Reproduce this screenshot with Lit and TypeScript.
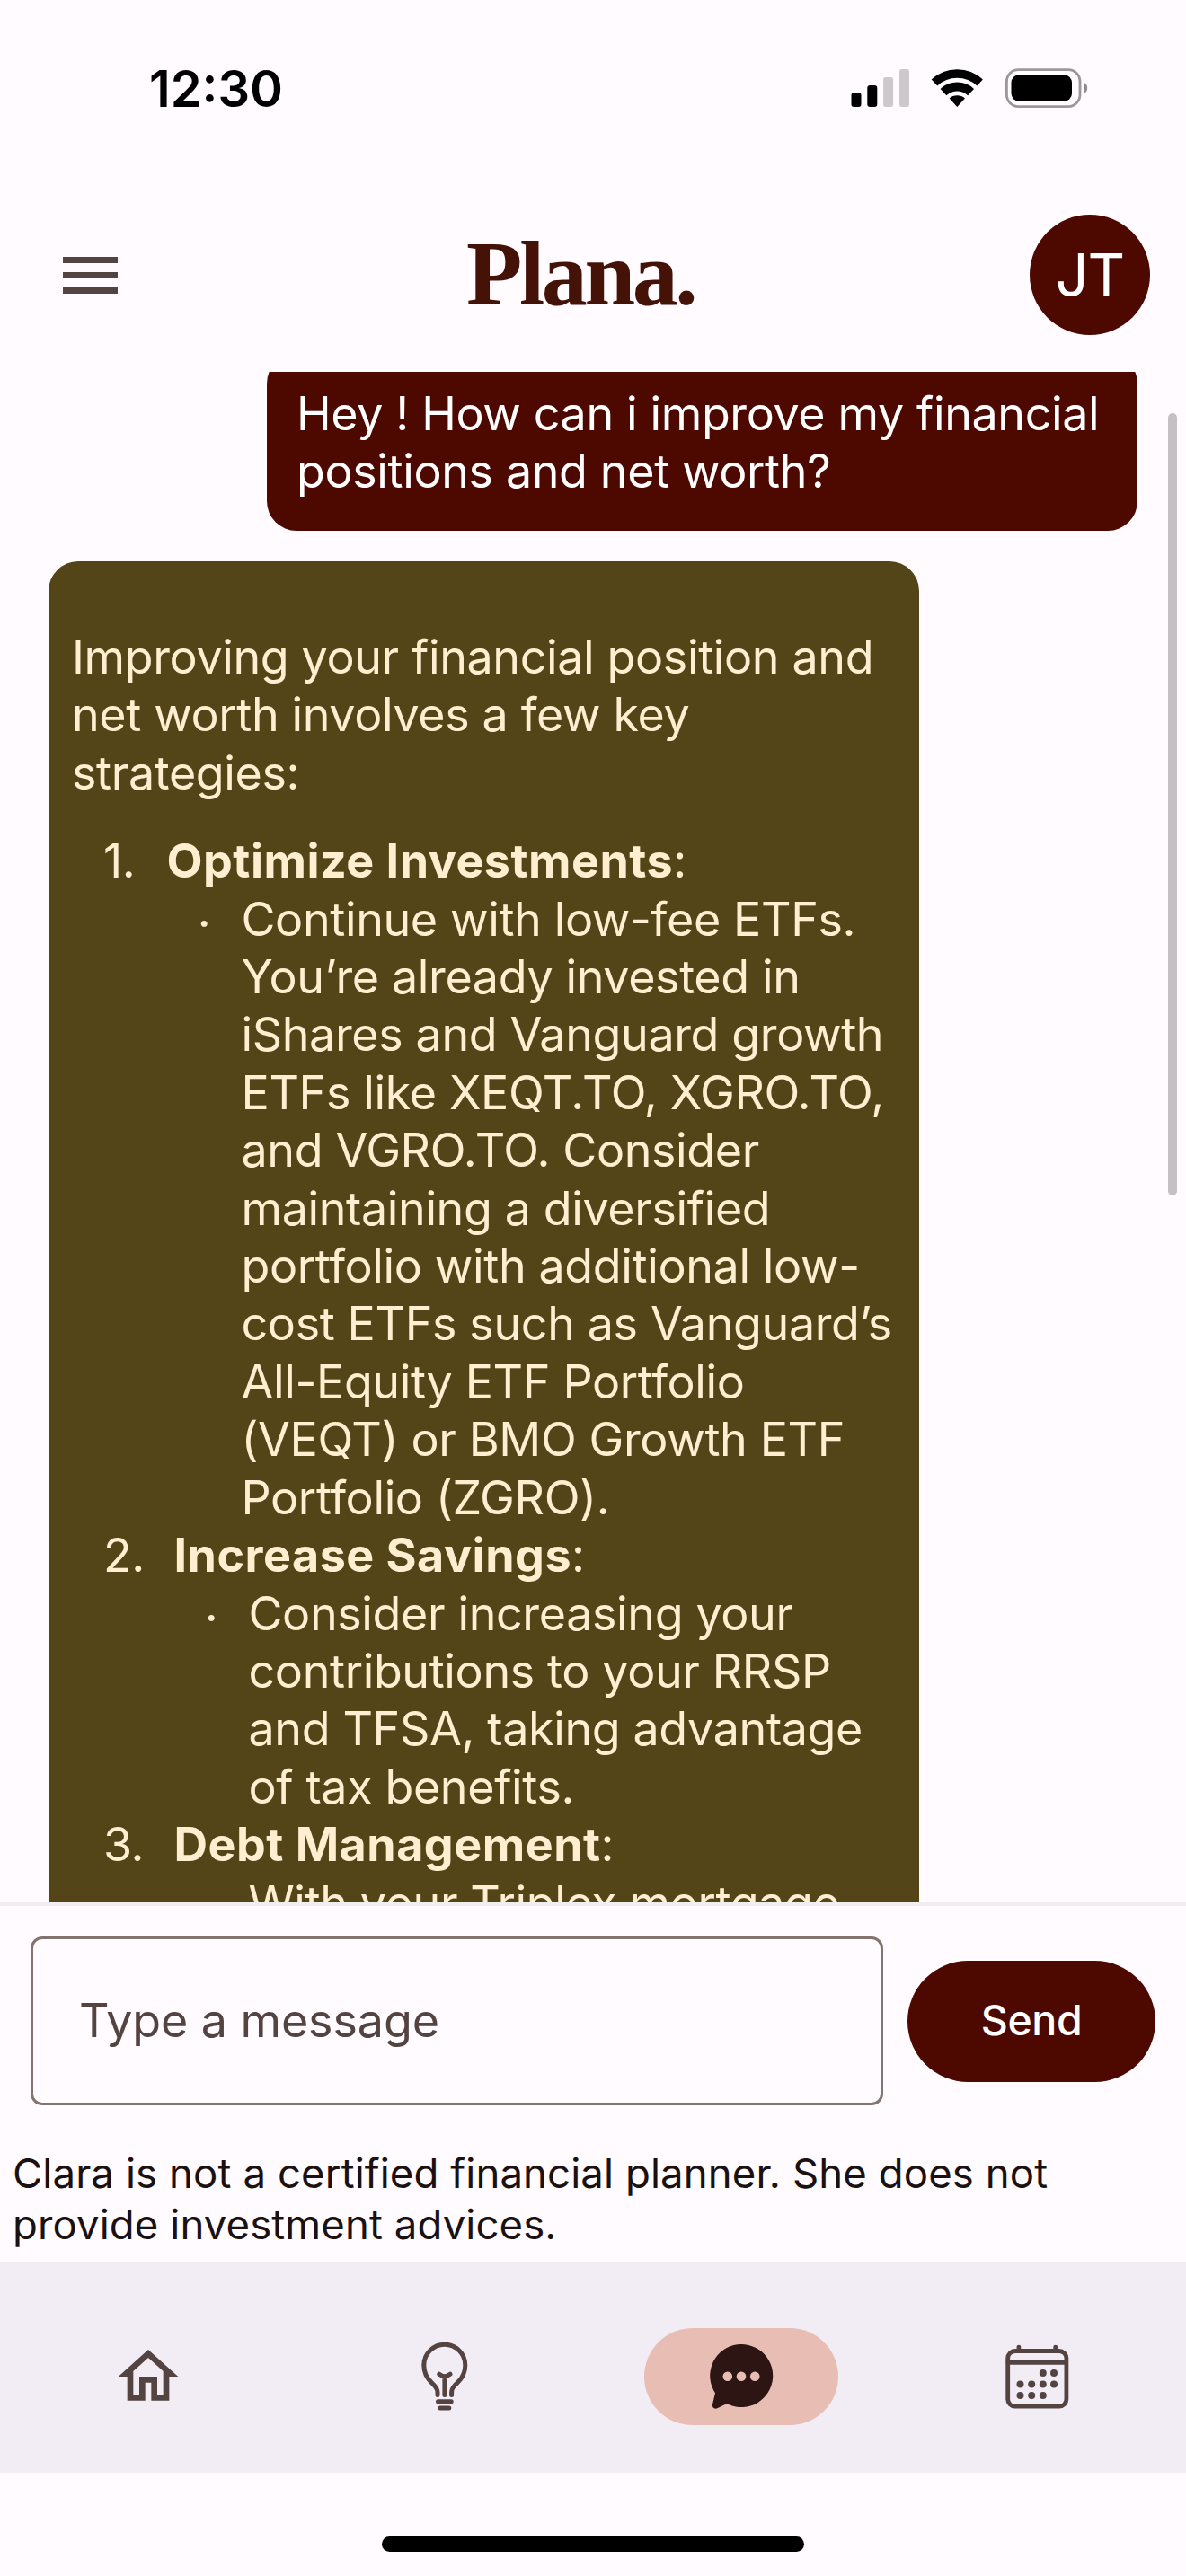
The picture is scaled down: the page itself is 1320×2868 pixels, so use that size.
import { LitElement, html, svg, css } from "lit";
import { customElement } from "lit/decorators.js";

interface Strategy {
  title: string;
  lines: string[];
}

const strategies: Strategy[] = [
  {
    title: "Optimize Investments",
    lines: [
      "Continue with low-fee ETFs.",
      "You’re already invested in",
      "iShares and Vanguard growth",
      "ETFs like XEQT.TO, XGRO.TO,",
      "and VGRO.TO. Consider",
      "maintaining a diversified",
      "portfolio with additional low-",
      "cost ETFs such as Vanguard’s",
      "All-Equity ETF Portfolio",
      "(VEQT) or BMO Growth ETF",
      "Portfolio (ZGRO).",
    ],
  },
  {
    title: "Increase Savings",
    lines: [
      "Consider increasing your",
      "contributions to your RRSP",
      "and TFSA, taking advantage",
      "of tax benefits.",
    ],
  },
  { title: "Debt Management", lines: ["With your Triplex mortgage"] },
];

const calendarDots = [
  [45.8, 36], [58, 36],
  [20.5, 48.5], [33.2, 48.5], [45.8, 48.5], [58, 48.5],
  [20.5, 61], [33.2, 61], [45.8, 61],
];

@customElement("status-bar")
class StatusBar extends LitElement {
  static styles = css`
    :host { display: flex; justify-content: space-between; height: 198px; flex: none; box-sizing: border-box; padding: 65px 100px 0 166px; }
    .time { font-size: 56px; line-height: 68px; font-weight: 600; letter-spacing: 0; color: #000; }
    .icons { display: block; width: 280px; height: 56px; margin-top: 5px; }
  `;
  render() {
    return html`
      <div class="time">12:30</div>
      <svg class="icons" viewBox="0 0 280 56" fill="#000">
        <rect x="7.5" y="33" width="11" height="16" rx="3" />
        <rect x="25.3" y="25" width="11" height="24" rx="3" />
        <rect x="43.1" y="16" width="11" height="33" rx="3" fill="#ccc8cc" />
        <rect x="61" y="7" width="11" height="42" rx="3" fill="#ccc8cc" />
        <path d="M100 21.9A37.1 37.1 0 0 1 150.6 21.9" fill="none" stroke="#000" stroke-width="9.6" />
        <path d="M110 32.6A22.5 22.5 0 0 1 140.6 32.6" fill="none" stroke="#000" stroke-width="10" />
        <path d="M125.3 49L116.6 39.6A13.3 13.3 0 0 1 134 39.6Z" />
        <rect x="180.4" y="7.7" width="81.6" height="40.9" rx="13" fill="none" stroke="#9b989b" stroke-width="2.8" />
        <rect x="185.5" y="13" width="67.5" height="30" rx="9" />
        <path d="M266 21.5C271.6 24 271.6 32 266 34.5Z" fill="#8f8c8f" />
      </svg>
    `;
  }
}

@customElement("nav-bar")
class NavBar extends LitElement {
  static styles = css`
    :host { display: flex; flex: none; height: 235px; box-sizing: border-box; padding-top: 74px; background: #f2edf5; }
    .cell { flex: 1; display: flex; justify-content: center; align-items: flex-start; }
    .pill { width: 216px; height: 108px; border-radius: 54px; display: flex; justify-content: center; align-items: center; color: #534341; }
    .active { background: #e8bdb4; color: #2c1512; }
    svg { display: block; width: 80px; height: 80px; }
  `;

  private home = svg`<path transform="scale(3.3333)" fill="currentColor" d="M12 5.69l5 4.5V18h-2v-6H9v6H7v-7.81l5-4.5M12 3L2 12h3v8h6v-6h2v6h6v-8h3L12 3z" />`;

  private bulb = svg`<g fill="none" stroke="currentColor" stroke-width="5" stroke-linecap="round" stroke-linejoin="round">
    <path d="M32 60.5V57C32 53 29 50 25.5 46.8C20 41.6 16.8 35.5 16.8 27.2A23 23 0 0 1 62.8 27.2C62.8 35.5 59.6 41.6 54 46.8C50.5 50 47.6 53 47.6 57V60.5" />
    <path d="M33.8 37.2C36 38.8 38 39.8 39.9 39.8C41.8 39.8 43.8 38.8 46 37.2M39.9 40V60.5" />
    <path d="M32.5 67.7H47.2M34.8 75H44.8" />
  </g>`;

  private chat = svg`<path fill="currentColor" d="M11 58.3L8 71C7.3 74.6 10 76.6 13.4 75.2L21 71.4C22.6 70.7 24 70.4 26 71A35 35 0 1 0 11 58.3Z" />
    ${[24.8, 40, 55.2].map((x) => svg`<circle cx=${x} cy="39.7" r="5.3" fill="#e8bdb4" />`)}`;

  private calendar = svg`<g fill="none" stroke="currentColor" stroke-width="4.8" stroke-linecap="round">
      <rect x="6.7" y="11.5" width="65.2" height="61.7" rx="8" />
      <path d="M7 24.3H71.5M18.9 7.1V11M59.7 7.1V11" />
    </g>
    ${calendarDots.map(([x, y]) => svg`<circle cx=${x} cy=${y} r="4" fill="currentColor" />`)}`;

  render() {
    const items = [
      { icon: this.home, active: false },
      { icon: this.bulb, active: false },
      { icon: this.chat, active: true },
      { icon: this.calendar, active: false },
    ];
    return items.map(
      (item) => html`<div class="cell">
        <div class=${item.active ? "pill active" : "pill"}>
          <svg viewBox="0 0 80 80">${item.icon}</svg>
        </div>
      </div>`
    );
  }
}

@customElement("app-root")
class AppRoot extends LitElement {
  static styles = css`
    :host { display: block; width: 1320px; height: 2868px; overflow: hidden; background: #fffbff; font-family: "Inter", "Liberation Sans", sans-serif; }
    * { box-sizing: border-box; }
    .screen { display: flex; flex-direction: column; width: 1320px; height: 2868px; }

    .header { height: 216px; flex: none; display: grid; grid-template-columns: 449px 1fr auto; align-items: center; padding: 0 40px 0 70px; }
    .menu { width: 61px; display: flex; flex-direction: column; gap: 10px; }
    .bar { height: 7px; background: #534341; }
    .logo { font-family: "Liberation Serif", serif; font-weight: 700; font-size: 102px; line-height: 110px; padding-bottom: 2px; color: #451207; letter-spacing: -3.4px; }
    .avatar { width: 134px; height: 134px; border-radius: 50%; background: #4d0800; color: #fff; font-size: 64.5px; letter-spacing: -1px; display: grid; place-items: center; }

    .chat { position: relative; height: 1704px; flex: none; overflow: hidden; display: flex; flex-direction: column; padding: 0 54px; }
    .bubble { width: 969px; flex: none; border-radius: 33px; font-size: 52px; line-height: 64.4px; letter-spacing: -0.37px; white-space: nowrap; }
    .mine { align-self: flex-end; margin-top: -20px; height: 197px; padding: 35px 33px; background: #4d0800; color: #fff; }
    .theirs { margin-top: 34px; padding: 75px 26px; background: #534518; color: #ffefd0; }
    p, ol, ul { margin: 0; padding: 0; list-style: none; }
    ol { margin-top: 34px; padding-left: 35px; }
    li { display: flex; }
    .num { width: 78.5px; flex: none; }
    .num.first { width: 70.5px; }
    .dot { width: 83px; flex: none; padding-top: 4px; text-align: center; }
    b { font-weight: 700; letter-spacing: 0.5px; }
    .scroll { position: absolute; right: 10px; top: 46px; width: 10px; height: 871px; border-radius: 5px; background: #c4c0c4; }

    .composer { height: 400px; flex: none; border-top: 4px solid #efefef; }
    .row { display: flex; align-items: center; gap: 27px; padding: 34px 34px 0; }
    .field { width: 949px; height: 188px; border: 3px solid #85736f; border-radius: 13px; padding: 0 0 1px 51px; display: flex; align-items: center; font-size: 52px; letter-spacing: -0.1px; color: #534341; }
    .send { width: 276px; height: 135px; border: 0; border-radius: 68px; background: #4d0800; color: #fff; padding: 0 0 2px; font: 500 46.5px "Inter", "Liberation Sans", sans-serif; letter-spacing: -0.4px; }
    .note { padding: 47px 0 0 14px; font-size: 45.5px; line-height: 57px; letter-spacing: 0.11px; color: #1a1110; white-space: nowrap; }

    .bottom { flex: 1; display: flex; justify-content: center; padding-top: 71px; }
    .indicator { width: 470px; height: 17px; border-radius: 9px; background: #000; }
  `;

  private joinLines(lines: string[]) {
    return lines.map((line, i) => (i ? html`<br />${line}` : line));
  }

  render() {
    return html`<div class="screen">
      <status-bar></status-bar>
      <div class="header">
        <div class="menu"><div class="bar"></div><div class="bar"></div><div class="bar"></div></div>
        <div class="logo">Plana.</div>
        <div class="avatar">JT</div>
      </div>
      <div class="chat">
        <div class="bubble mine">${this.joinLines(["Hey ! How can i improve my financial", "positions and net worth?"])}</div>
        <div class="bubble theirs">
          <p>${this.joinLines(["Improving your financial position and", "net worth involves a few key", "strategies:"])}</p>
          <ol>
            ${strategies.map(
              (s, i) => html`<li>
                <span class=${i === 0 ? "num first" : "num"}>${i + 1}.</span>
                <div>
                  <b>${s.title}</b>:
                  <ul>
                    <li><span class="dot">·</span><div>${this.joinLines(s.lines)}</div></li>
                  </ul>
                </div>
              </li>`
            )}
          </ol>
        </div>
        <div class="scroll"></div>
      </div>
      <div class="composer">
        <div class="row">
          <div class="field">Type a message</div>
          <button class="send">Send</button>
        </div>
        <div class="note">${this.joinLines(["Clara is not a certified financial planner. She does not", "provide investment advices."])}</div>
      </div>
      <nav-bar></nav-bar>
      <div class="bottom"><div class="indicator"></div></div>
    </div>`;
  }
}
